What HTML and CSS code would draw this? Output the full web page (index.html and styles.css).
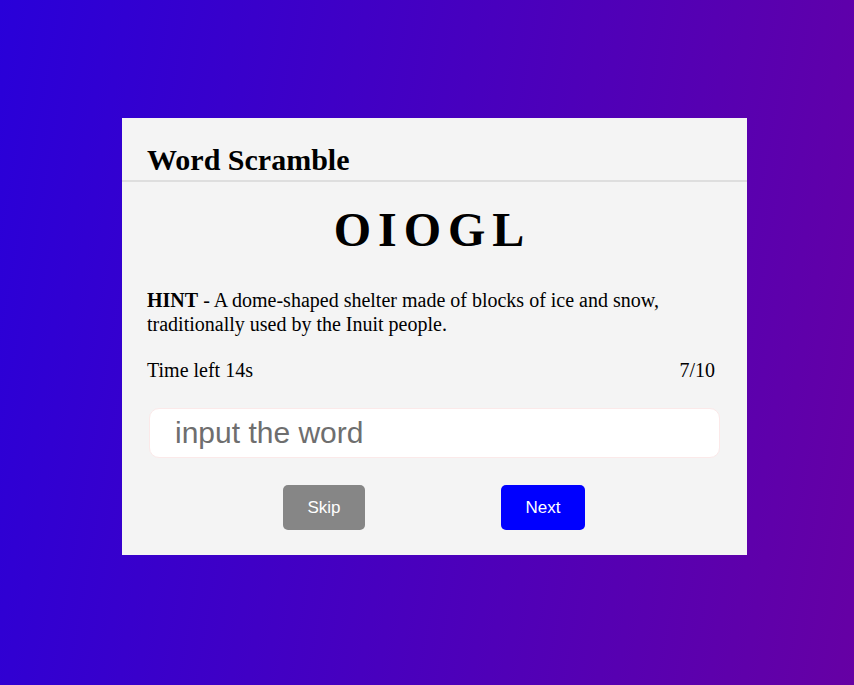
FILE: index.html
```html
<!DOCTYPE html>
<html>
<head>
<meta charset="utf-8">
<link rel="stylesheet" href="styles.css">
</head>
<body>
<div class="card">
  <h2 class="title">Word Scramble</h2>
  <div class="content">
    <p class="word">OIOGL</p>
    <p class="hint"><b>HINT</b> - A dome-shaped shelter made of blocks of ice and snow, traditionally used by the Inuit people.</p>
    <div class="status"><span>Time left 14s</span><span>7/10</span></div>
    <input class="answer" type="text" placeholder="input the word" autofocus>
    <div class="buttons">
      <button class="btn skip">Skip</button>
      <button class="btn next">Next</button>
    </div>
  </div>
</div>
</body>
</html>
```
FILE: styles.css
```css
html, body { margin: 0; height: 100%; }
body {
  background: linear-gradient(100deg, #2900d9 0%, #6600a4 100%);
  font-family: "Liberation Serif", "Times New Roman", serif;
  display: flex;
  justify-content: flex-start;
  align-items: flex-start;
  padding: 118px 0 0 122px;
  box-sizing: border-box;
}
.card {
  width: 625px;
  background: #f4f4f4;
}
.title {
  margin: 0;
  font-size: 30px;
  font-weight: bold;
  padding: 26px 25px 4px;
  line-height: 32px;
  border-bottom: 2px solid #dedede;
}
.content {
  padding: 0 32px 25px 25px;
}
.word {
  margin: 18px 0 0;
  text-align: center;
  font-size: 48px;
  font-weight: bold;
  letter-spacing: 7px;
  line-height: 60px;
  padding-left: 3px;
}
.hint {
  margin: 28px 0 0;
  font-size: 20px;
  line-height: 24px;
}
.status {
  margin-top: 22px;
  display: flex;
  justify-content: space-between;
  font-size: 20px;
  line-height: 24px;
}
.answer {
  display: block;
  box-sizing: border-box;
  width: 571px;
  height: 50px;
  margin: 26px 0 0 2px;
  border: 1px solid #fbe9e9;
  border-radius: 10px;
  background: #fff;
  padding: 0 25px;
  font-family: "Liberation Sans", Arial, sans-serif;
  font-size: 30px;
  color: #222;
  outline: none;
  caret-color: #000;
}
.answer::placeholder { color: #6e6e6e; }
.buttons {
  margin-top: 27px;
  display: flex;
  justify-content: center;
  gap: 136px;
  padding-left: 6px;
}
.btn {
  height: 45px;
  border: none;
  border-radius: 5px;
  color: #fff;
  font-family: "Liberation Sans", Arial, sans-serif;
  font-size: 17px;
}
.skip { width: 82px; background: #868686; }
.next { width: 84px; background: #0000ff; }
```
